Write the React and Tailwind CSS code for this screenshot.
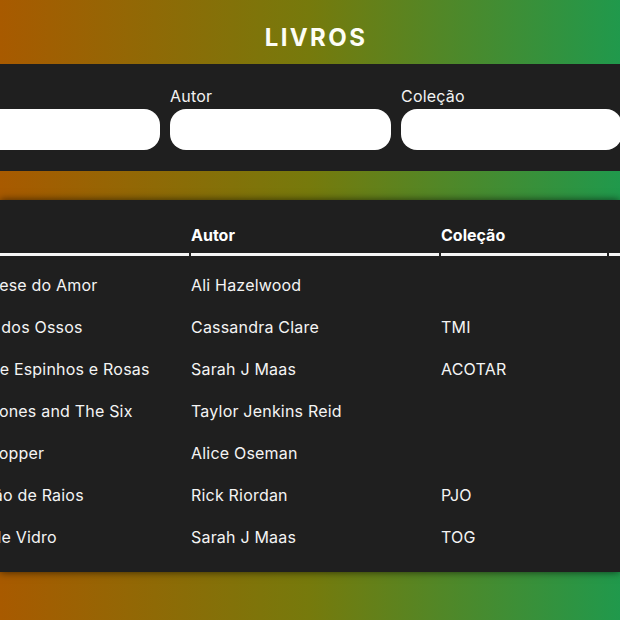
import React from 'react'

const books = [
  { title: 'A Hipótese do Amor', author: 'Ali Hazelwood', collection: '' },
  { title: 'Cidade dos Ossos', author: 'Cassandra Clare', collection: 'TMI' },
  { title: 'Corte de Espinhos e Rosas', author: 'Sarah J Maas', collection: 'ACOTAR' },
  { title: 'Daisy Jones and The Six', author: 'Taylor Jenkins Reid', collection: '' },
  { title: 'Heartstopper', author: 'Alice Oseman', collection: '' },
  { title: 'O Ladrão de Raios', author: 'Rick Riordan', collection: 'PJO' },
  { title: 'Trono de Vidro', author: 'Sarah J Maas', collection: 'TOG' },
]

const cols = 'grid grid-cols-[247px_248px_166px_200px] gap-x-[2px]'

const App = () => {
  return (
    <div
      className="min-h-screen w-[620px] overflow-hidden bg-[linear-gradient(to_right,#a85a00,#767a0c,#20994c)] text-white"
      style={{ fontFamily: 'Inter, "Open Sans", sans-serif' }}
    >
      {/* Header */}
      <header className="h-16 flex items-center justify-center pl-3 pt-[11px]">
        <h1 className="text-2xl font-bold tracking-widest text-[#fdfdf5]">LIVROS</h1>
      </header>

      {/* Filters */}
      <section className="bg-[#1f1f1f] pt-5 pb-[21px]">
        <div className="-ml-[61px] flex gap-[10px]">
          {['Título', 'Autor', 'Coleção'].map((label) => (
            <div key={label} className="w-[221px] shrink-0 flex flex-col">
              <label className="text-base leading-6 mb-[1px] tracking-[0.2px] text-[#f2f2f2]">{label}</label>
              <input className="h-[41px] w-full rounded-2xl bg-white text-black px-4 outline-none" />
            </div>
          ))}
        </div>
      </section>

      <div className="h-[29px]" />

      {/* Table */}
      <section className="bg-[#1f1f1f] h-[372px] pt-[17px] shadow-[0_0_8px_rgba(0,0,0,0.65)]">
        <div className="-ml-[58px]">
          <div className={cols}>
            {['Título', 'Autor', 'Coleção', '\u00a0'].map((h) => (
              <div key={h} className="pt-[6px] pb-[6px] leading-6 font-bold border-b-[3px] border-[#f5f5f5]">
                {h}
              </div>
            ))}
          </div>
          <div className="mt-[8px]">
            {books.map((b) => (
              <div key={b.title} className={`${cols} h-[42px] items-center text-base tracking-[0.2px] text-[#f4f4f4]`}>
                <div className="whitespace-nowrap">{b.title}</div>
                <div className="whitespace-nowrap">{b.author}</div>
                <div className="whitespace-nowrap">{b.collection}</div>
                <div />
              </div>
            ))}
          </div>
        </div>
      </section>
    </div>
  )
}

export default App
